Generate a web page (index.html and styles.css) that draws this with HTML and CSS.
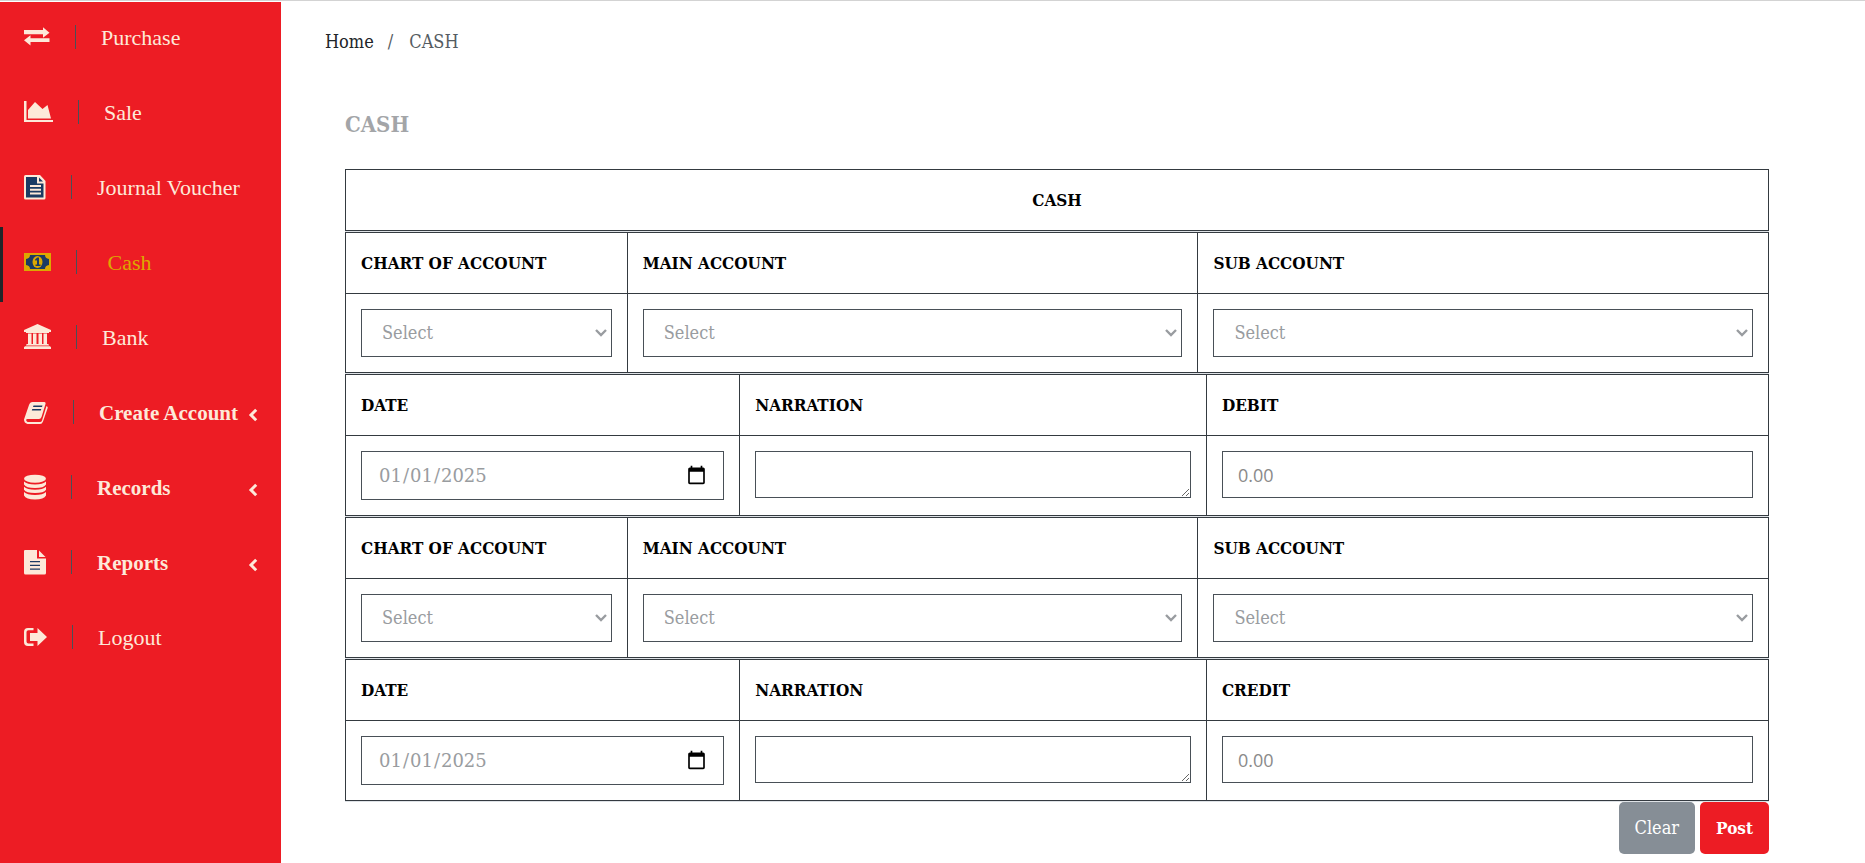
FILE: index.html
```html
<!DOCTYPE html>
<html lang="en">
<head>
<meta charset="utf-8">
<title>Cash</title>
<link rel="stylesheet" href="styles.css">
</head>
<body>
<div class="app">
  <nav class="sidebar" aria-label="Main">
    <a class="nav-link" href="#">
      <svg class="icon" width="26" height="26" viewBox="0 0 26 26"><path d="M0 6h19V2.500L25.500 9 19 15v-4H0zM25.500 15.500h-19V12L0 18l6.500 6v-4h19z" transform="translate(0 1) scale(1 .85)"/></svg>
      <span class="divider"></span><span class="label">Purchase</span>
    </a>
    <a class="nav-link" href="#">
      <svg class="icon" width="29" height="26" viewBox="0 0 29 26"><path d="M0 2h2.500v19H29v2H0zM4 19.500V11l7-8 7.500 7L23.500 6 27 19.500z"/></svg>
      <span class="divider"></span><span class="label">Sale</span>
    </a>
    <a class="nav-link" href="#">
      <svg class="icon" width="22" height="26" viewBox="0 0 22 26"><path d="M1.500 1H16l5.500 6v17q0 1.500-1.500 1.500H1.500Q0 25.500 0 24V2.500Q0 1 1.500 1z"/><path class="ink" d="M2 3h11v6.500h6.500v14H2zM15 3.500 19 7.500h-4z"/><path d="M6 11h11v2H6zM6 14.700h11v2H6zM6 18.400h11v2H6z"/></svg>
      <span class="divider"></span><span class="label">Journal Voucher</span>
    </a>
    <a class="nav-link active" href="#" aria-current="page">
      <svg class="icon" width="27" height="26" viewBox="0 0 27 26"><path d="M0 4h27v18H0z"/><path class="ink" d="M6 6h15q0 3.500 4 4v6q-4 .500-4 4H6q0-3.500-4-4v-6q4-.500 4-4z"/><ellipse cx="13.500" cy="13" rx="5" ry="6"/><path class="ink" d="M11 10.500 13.300 8.500H15v7h1.500V17h-5v-1.500H13v-4.500l-1.200 1z"/></svg>
      <span class="divider"></span><span class="label">&nbsp;Cash</span>
    </a>
    <a class="nav-link" href="#">
      <svg class="icon" width="27" height="26" viewBox="0 0 27 26"><path d="M13.500 0 27 6v2h-2v1H2V8H0V6zM4 9.500h3.500V20H9V9.500h3.500V20h2V9.500H18V20h1.500V9.500H23V20h1q1 0 1 1.500H2Q2 20 3 20h1zM1 22.300h25l1 1V25H0v-1.700z"/></svg>
      <span class="divider"></span><span class="label">Bank</span>
    </a>
    <a class="nav-link parent" href="#">
      <svg class="icon" width="24" height="26" viewBox="0 0 24 26"><path d="M8.500 3H20q2 0 1.500 2L17.500 18q-.700 2-2.500 2H3.500q-2 0-1 2 .500 1 1.500 1h12q1.500 0 2-1.500L22.500 7q1.700.700 1 2.500L19 22.500Q18 25 16 25H3.500Q0 24 0 20.500L5 6q1-3 3.500-3z"/><path class="ink" d="M9.500 6.500h9L18 8H9zM8.300 10h9l-.500 1.500h-9z"/></svg>
      <span class="divider"></span><span class="label">Create Account</span>
      <svg class="chevron" width="10" height="14" viewBox="0 0 10 14"><path d="M8.200 1.800 3 7l5.200 5.200"/></svg>
    </a>
    <a class="nav-link parent" href="#">
      <svg class="icon" width="22" height="26" viewBox="0 0 22 26"><ellipse cx="11" cy="4.700" rx="11" ry="4"/><path d="M0 7.500q3 3 11 3t11-3v3q-2 3.500-11 3.500T0 10.500zM0 12.800q3 3 11 3t11-3v3q-2 3.300-11 3.300T0 15.800zM0 18q3 3 11 3t11-3v3.500q-2 4-11 4t-11-4z"/></svg>
      <span class="divider"></span><span class="label">Records</span>
      <svg class="chevron" width="10" height="14" viewBox="0 0 10 14"><path d="M8.200 1.800 3 7l5.200 5.200"/></svg>
    </a>
    <a class="nav-link parent" href="#">
      <svg class="icon" width="22" height="26" viewBox="0 0 22 26"><path d="M1 1h12v8.500h9V24q0 1.500-1.500 1.500h-19Q0 25.500 0 24V2.200Q0 1 1 1zM15 1.500 21.500 8H15z"/><path class="ink" d="M6 12h10v1.300H6zM6 15.700h10V17H6zM6 19.400h10v1.300H6z"/></svg>
      <span class="divider"></span><span class="label">Reports</span>
      <svg class="chevron" width="10" height="14" viewBox="0 0 10 14"><path d="M8.200 1.800 3 7l5.200 5.200"/></svg>
    </a>
    <a class="nav-link" href="#">
      <svg class="icon" width="23" height="26" viewBox="0 0 23 26"><path d="M9.500 4v2.300H4.500Q2.500 6.300 2.500 8v9.500q0 2 2 2h5V22H4q-4 0-4-4V8q0-4 4-4zM6 9h7.500V4L23 13l-9.500 9v-5H6z"/></svg>
      <span class="divider"></span><span class="label">Logout</span>
    </a>
  </nav>

  <main class="content">
    <ol class="breadcrumb">
      <li><a href="#">Home</a></li>
      <li aria-current="page">CASH</li>
    </ol>
    <form class="voucher">
      <h1 class="title">CASH</h1>
      <div class="tables">
        <table class="grid caption"><tr><th>CASH</th></tr></table>

        <table class="grid accounts">
          <tr><th><label for="chart1">CHART OF ACCOUNT</label></th><th><label for="main1">MAIN ACCOUNT</label></th><th><label for="sub1">SUB ACCOUNT</label></th></tr>
          <tr>
            <td><select class="field" id="chart1"><option>Select</option></select></td>
            <td><select class="field" id="main1"><option>Select</option></select></td>
            <td><select class="field" id="sub1"><option>Select</option></select></td>
          </tr>
        </table>

        <table class="grid amounts">
          <tr><th><label for="date1">DATE</label></th><th><label for="note1">NARRATION</label></th><th><label for="debit">DEBIT</label></th></tr>
          <tr>
            <td><input class="field date" type="date" id="date1" value="2025-01-01"></td>
            <td><textarea class="field note" id="note1"></textarea></td>
            <td><input class="field amount" type="text" id="debit" placeholder="0.00"></td>
          </tr>
        </table>

        <table class="grid accounts">
          <tr><th><label for="chart2">CHART OF ACCOUNT</label></th><th><label for="main2">MAIN ACCOUNT</label></th><th><label for="sub2">SUB ACCOUNT</label></th></tr>
          <tr>
            <td><select class="field" id="chart2"><option>Select</option></select></td>
            <td><select class="field" id="main2"><option>Select</option></select></td>
            <td><select class="field" id="sub2"><option>Select</option></select></td>
          </tr>
        </table>

        <table class="grid amounts">
          <tr><th><label for="date2">DATE</label></th><th><label for="note2">NARRATION</label></th><th><label for="credit">CREDIT</label></th></tr>
          <tr>
            <td><input class="field date" type="date" id="date2" value="2025-01-01"></td>
            <td><textarea class="field note" id="note2"></textarea></td>
            <td><input class="field amount" type="text" id="credit" placeholder="0.00"></td>
          </tr>
        </table>
      </div>
      <div class="actions">
        <button class="btn clear" type="reset">Clear</button>
        <button class="btn post" type="submit">Post</button>
      </div>
    </form>
  </main>
</div>
</body>
</html>
```

FILE: styles.css
```css
* { box-sizing: border-box; }

body {
  margin: 0;
  border-top: 1px solid #d3d3d3;
  background: #fff;
  color: #212529;
  font: 18px/30px "DejaVu Serif Condensed", "DejaVu Serif", serif;
}

a { color: inherit; text-decoration: none; }

.app {
  display: flex;
  min-height: calc(100vh - 1px);
  padding-top: 1px;
}

/* Sidebar */
.sidebar {
  flex: 0 0 281px;
  background: #ed1c24;
  color: #fde9d9;
  font-family: "Liberation Serif", serif;
  font-size: 22px;
}

.nav-link {
  display: flex;
  align-items: center;
  height: 75px;
  padding: 0 23px 6px 21px;
  border-left: 3px solid transparent;
}

.nav-link.active { border-left-color: #212529; color: #dca800; }
.nav-link.parent { font-size: 21px; font-weight: bold; }

.icon { flex: none; fill: currentColor; }
.icon .ink { fill: #1b3a63; }

.divider {
  width: 1px;
  height: 24px;
  margin: 0 25px;
  background: #495057;
}

.label { white-space: nowrap; padding-top: 3px; }

.chevron {
  flex: none;
  margin-left: auto;
  margin-top: 6px;
  fill: none;
  stroke: currentColor;
  stroke-width: 3;
}

/* Content */
.content { flex: 1; min-width: 0; padding: 25px 96px 0 44px; }

.breadcrumb {
  display: flex;
  margin: 0;
  padding: 0;
  list-style: none;
  color: #555c62;
}

.breadcrumb a { color: #212529; }
.breadcrumb li + li::before { content: "/"; padding: 0 16px 0 14px; }

.voucher { padding: 52px 0 0 20px; }

.title {
  margin: 0 0 30px;
  color: #a3a5a8;
  font-size: 22px;
  line-height: 30px;
}

.tables {
  display: flex;
  flex-direction: column;
  gap: 1px;
  padding-bottom: 1px;
  background: #dee2e6;
}

.grid {
  width: 100%;
  border-collapse: collapse;
  table-layout: fixed;
  background: #fff;
}

.grid th, .grid td {
  padding: 15px;
  border: 1px solid #343a40;
  text-align: left;
  vertical-align: top;
}

.grid th { color: #000; font-size: 17px; }
.grid.caption th { text-align: center; }

.accounts th:first-child { width: 19.8%; }
.amounts th:first-child { width: 27.7%; }
.amounts th:nth-child(2) { width: 32.8%; }

.field {
  display: block;
  width: 100%;
  height: 48px;
  margin: 0;
  padding: 0 16px;
  border: 1px solid #495057;
  border-radius: 0;
  background: #fff;
  color: #999ca0;
  font: inherit;
}

select.field {
  appearance: none;
  padding: 0 20px;
  background: #fff url("data:image/svg+xml,%3Csvg xmlns='http://www.w3.org/2000/svg' width='12' height='8'%3E%3Cpath d='M1 1l5 5 5-5' fill='none' stroke='%23999ca0' stroke-width='2.400'/%3E%3C/svg%3E") no-repeat right 4px center;
}

.field.date { height: 49px; font-family: "DejaVu Serif", serif; }
.field.date::-webkit-calendar-picker-indicator { width: 21px; height: 21px; padding: 0; }
.field.note { height: 47px; }
.field.amount { height: 47px; padding: 0 15px; font-family: "Open Sans", sans-serif; }
.field::placeholder { color: #8a8a8a; }

.actions { display: flex; justify-content: flex-end; gap: 5px; }

.btn {
  padding: 11px 16px;
  border: 0;
  border-radius: 5px;
  color: #fff;
  font: inherit;
}

.clear { background: #868e96; }
.post { background: #ed1c24; font-size: 17px; font-weight: bold; }
```
